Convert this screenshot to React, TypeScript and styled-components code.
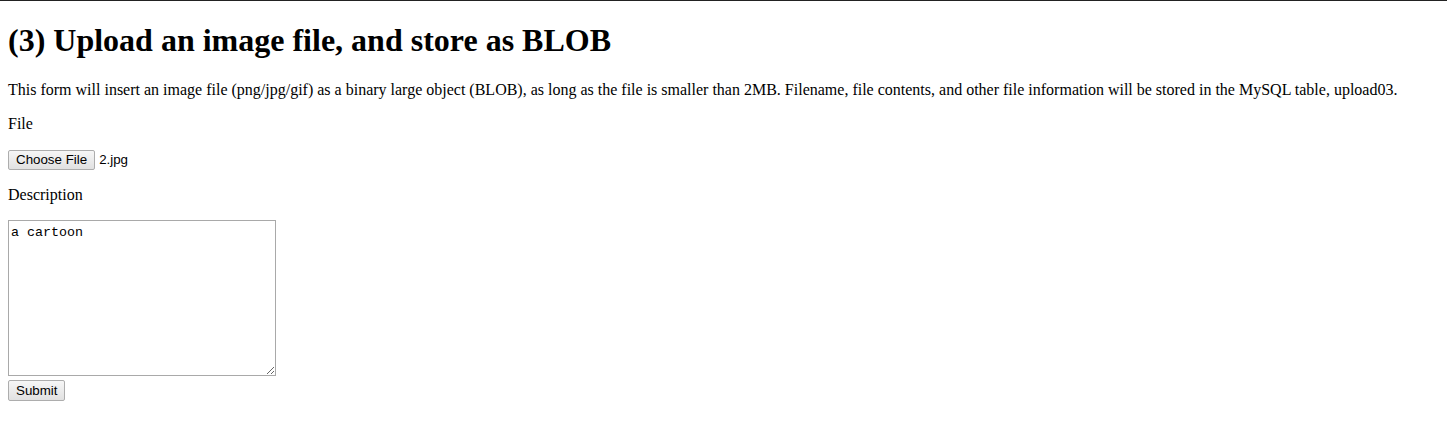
import React from "react"
import styled, { createGlobalStyle } from "styled-components"

const GlobalStyle = createGlobalStyle`
  html, body {
    margin: 0;
    padding: 0;
    background: #fff;
  }
  body {
    font-family: "Liberation Serif", "Times New Roman", serif;
    color: #000;
  }
`

const Page = styled.div`
  border-top: 1px solid #222;
  padding: 0 8px;
`

const Title = styled.h1`
  font-size: 32px;
  font-weight: bold;
  margin: 21.44px 0;
`

const Text = styled.p`
  font-size: 16px;
  margin: 16px 0;
`

const FileRow = styled.div`
  display: flex;
  align-items: center;
  gap: 4px;
  margin: 17px 0 16px;
  font-family: "Liberation Sans", Arial, sans-serif;
  font-size: 13.33px;
`

const Button = styled.button<{ $h?: number }>`
  font-family: "Liberation Sans", Arial, sans-serif;
  font-size: 13.33px;
  color: #000;
  background: linear-gradient(#f6f6f6, #e1e1e1);
  border: 1px solid #adadad;
  border-radius: 2px;
  padding: 1px 7px;
  height: ${p => p.$h || 20}px;
  display: block;
`

const TextArea = styled.textarea`
  display: block;
  box-sizing: border-box;
  width: 268px;
  height: 156px;
  margin: 0 0 4px;
  padding: 4px 2px 2px;
  border: 1px solid #a9a9a9;
  font-family: "Liberation Mono", "DejaVu Sans Mono", monospace;
  font-size: 13.33px;
  color: #000;
  resize: both;
`

export default function App() {
  return (
    <>
      <GlobalStyle />
      <Page>
        <Title>(3) Upload an image file, and store as BLOB</Title>
        <Text>
          This form will insert an image file (png/jpg/gif) as a binary large object (BLOB), as long as the file is smaller than 2MB. Filename, file contents, and other file information will be stored in the MySQL table, upload03.
        </Text>
        <Text>File</Text>
        <FileRow>
          <Button type="button">Choose File</Button>
          <span>2.jpg</span>
        </FileRow>
        <Text>Description</Text>
        <TextArea defaultValue="a cartoon" />
        <Button type="submit" $h={21}>Submit</Button>
      </Page>
    </>
  )
}
